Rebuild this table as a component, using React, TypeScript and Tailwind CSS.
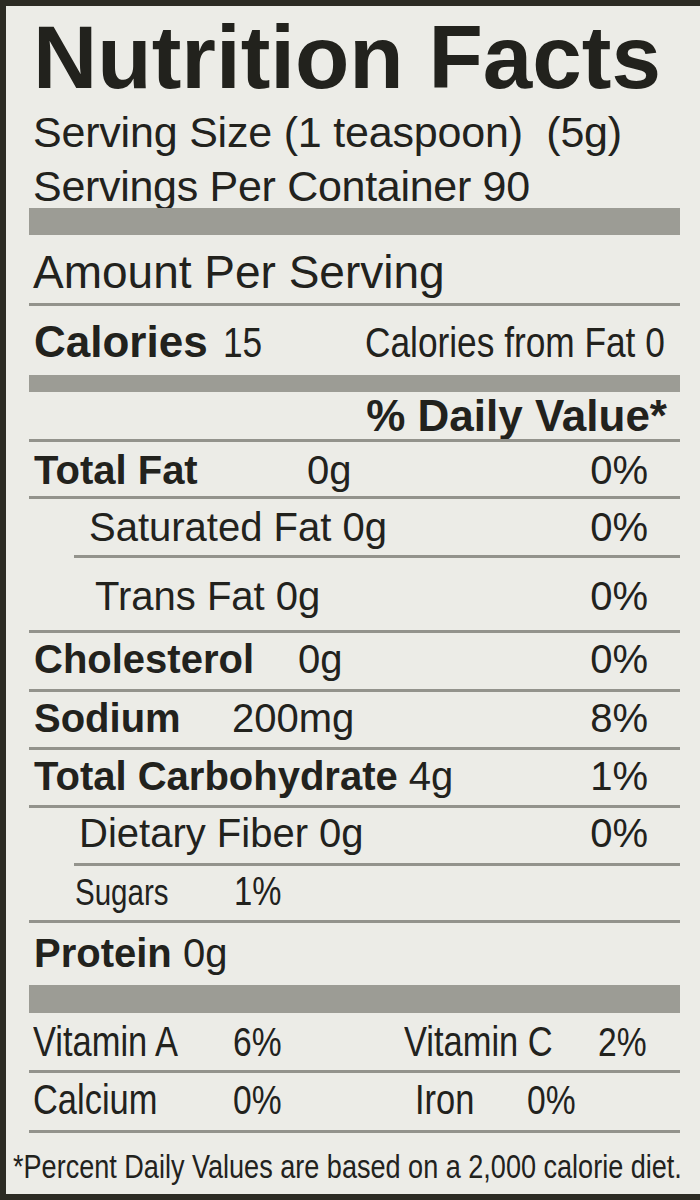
import React from "react";

const REG = "font-['Liberation_Sans',Arial,sans-serif]";

function N({ className = "", children }: { className?: string; children: React.ReactNode }) {
  return (
    <span className={`inline-block origin-left scale-x-[0.82] whitespace-nowrap ${className}`}>{children}</span>
  );
}

function Line({ indent = false }: { indent?: boolean }) {
  return <div className={`h-[3px] shrink-0 bg-[#93938c] ${indent ? "ml-[45px]" : ""}`} />;
}

function Bar({ h }: { h: string }) {
  return <div className={`${h} shrink-0 bg-[#9c9c95]`} />;
}

export default function App() {
  return (
    <div
      className={`w-[700px] h-[1200px] bg-[#ecece7] text-[#22221d] border-l-[6px] border-t-[6px] border-b-[6px] border-[#2c2b24] pl-[23px] pr-[20px] flex flex-col overflow-hidden ${REG}`}
    >
      {/* Title */}
      <div className="h-[96px] shrink-0 flex items-end pl-[4px]">
        <h1 className="text-[89px] font-bold leading-none whitespace-nowrap">Nutrition Facts</h1>
      </div>
      <div className="h-[53px] shrink-0 flex items-end pl-[4px] pb-[1px]">
        <p className="text-[43px] leading-none tracking-[-0.2px] whitespace-pre">Serving Size (1 teaspoon)  (5g)</p>
      </div>
      <div className="h-[53px] shrink-0 flex items-end pl-[4px]">
        <p className="text-[43px] leading-none tracking-[-0.3px] whitespace-nowrap">Servings Per Container 90</p>
      </div>
      <Bar h="h-[27px]" />

      {/* Amount per serving */}
      <div className="h-[68px] shrink-0 flex items-end pl-[4px] pb-[8px]">
        <p className="text-[46px] leading-none whitespace-nowrap">Amount Per Serving</p>
      </div>
      <Line />

      {/* Calories */}
      <div className="h-[69px] shrink-0 flex items-end pl-[5px] pb-[11px] leading-none">
        <div className="w-[331px] shrink-0 flex items-baseline">
          <span className="text-[44px] font-bold">Calories</span>
          <N className="text-[43px] ml-[15px]">15</N>
        </div>
        <div className="w-0 flex items-baseline">
          <N className="text-[43px]">Calories from Fat 0</N>
        </div>
      </div>
      <Bar h="h-[17px]" />

      {/* % Daily value */}
      <div className="h-[47px] shrink-0 flex items-end justify-end pr-[13px] pb-[1px]">
        <span className="text-[44px] font-bold leading-none whitespace-nowrap">% Daily Value*</span>
      </div>
      <Line />

      {/* Total Fat */}
      <div className="h-[54px] shrink-0 flex items-end pl-[5px] pr-[32px] pb-[6px] leading-none text-[40px]">
        <div className="flex-1 flex items-baseline">
          <span className="w-[273px] shrink-0 font-bold">Total Fat</span>
          <span>0g</span>
        </div>
        <span>0%</span>
      </div>
      <Line />

      {/* Saturated Fat */}
      <div className="h-[56px] shrink-0 flex items-end pl-[60px] pr-[32px] pb-[8px] leading-none text-[40px]">
        <span className="flex-1 whitespace-nowrap">Saturated Fat 0g</span>
        <span>0%</span>
      </div>
      <Line indent />

      {/* Trans Fat */}
      <div className="h-[72px] shrink-0 flex items-end pl-[66px] pr-[32px] pb-[14px] leading-none text-[40px]">
        <span className="flex-1 whitespace-nowrap">Trans Fat 0g</span>
        <span>0%</span>
      </div>
      <Line />

      {/* Cholesterol */}
      <div className="h-[56px] shrink-0 flex items-end pl-[5px] pr-[32px] pb-[10px] leading-none text-[40px]">
        <div className="flex-1 flex items-baseline">
          <span className="w-[264px] shrink-0 font-bold">Cholesterol</span>
          <span>0g</span>
        </div>
        <span>0%</span>
      </div>
      <Line />

      {/* Sodium */}
      <div className="h-[55px] shrink-0 flex items-end pl-[5px] pr-[32px] pb-[9px] leading-none text-[40px]">
        <div className="flex-1 flex items-baseline">
          <span className="w-[198px] shrink-0 font-bold">Sodium</span>
          <span>200mg</span>
        </div>
        <span>8%</span>
      </div>
      <Line />

      {/* Total Carbohydrate */}
      <div className="h-[55px] shrink-0 flex items-end pl-[5px] pr-[32px] pb-[9px] leading-none text-[40px]">
        <div className="flex-1 whitespace-pre">
          <span className="font-bold">Total Carbohydrate</span>
          <span> 4g</span>
        </div>
        <span>1%</span>
      </div>
      <Line />

      {/* Dietary Fiber */}
      <div className="h-[55px] shrink-0 flex items-end pl-[50px] pr-[32px] pb-[10px] leading-none text-[40px]">
        <span className="flex-1 whitespace-nowrap">Dietary Fiber 0g</span>
        <span>0%</span>
      </div>
      <Line indent />

      {/* Sugars */}
      <div className="h-[54px] shrink-0 flex items-end pl-[46px] pb-[9px] leading-none">
        <div className="flex items-baseline">
          <div className="w-[159px] shrink-0">
            <N className="text-[36px]">Sugars</N>
          </div>
          <N className="text-[40px]">1%</N>
        </div>
      </div>
      <Line />

      {/* Protein */}
      <div className="h-[62px] shrink-0 flex items-end pl-[5px] pb-[12px] leading-none text-[40px] whitespace-pre">
        <span className="font-bold">Protein</span>
        <span> 0g</span>
      </div>
      <Bar h="h-[28px]" />

      {/* Vitamins */}
      <div className="h-[57px] shrink-0 flex items-end pl-[4px] pb-[7px] leading-none">
        <div className="flex items-baseline">
          <div className="w-[200px] shrink-0"><N className="text-[42px]">Vitamin A</N></div>
          <div className="w-[171px] shrink-0"><N className="text-[41px]">6%</N></div>
          <div className="w-[194px] shrink-0"><N className="text-[42px]">Vitamin C</N></div>
          <div className="shrink-0"><N className="text-[41px]">2%</N></div>
        </div>
      </div>
      <Line />
      <div className="h-[57px] shrink-0 flex items-end pl-[4px] pb-[9px] leading-none">
        <div className="flex items-baseline">
          <div className="w-[200px] shrink-0"><N className="text-[42px]">Calcium</N></div>
          <div className="w-[182px] shrink-0"><N className="text-[41px]">0%</N></div>
          <div className="w-[112px] shrink-0"><N className="text-[42px]">Iron</N></div>
          <div className="shrink-0"><N className="text-[41px]">0%</N></div>
        </div>
      </div>
      <Line />

      {/* Footnote */}
      <div className="h-[61px] shrink-0 flex items-end -ml-[16px] pb-[11px] leading-none">
        <div className="w-0">
          <N className="text-[33px]">*Percent Daily Values are based on a 2,000 calorie diet.</N>
        </div>
      </div>
    </div>
  );
}
